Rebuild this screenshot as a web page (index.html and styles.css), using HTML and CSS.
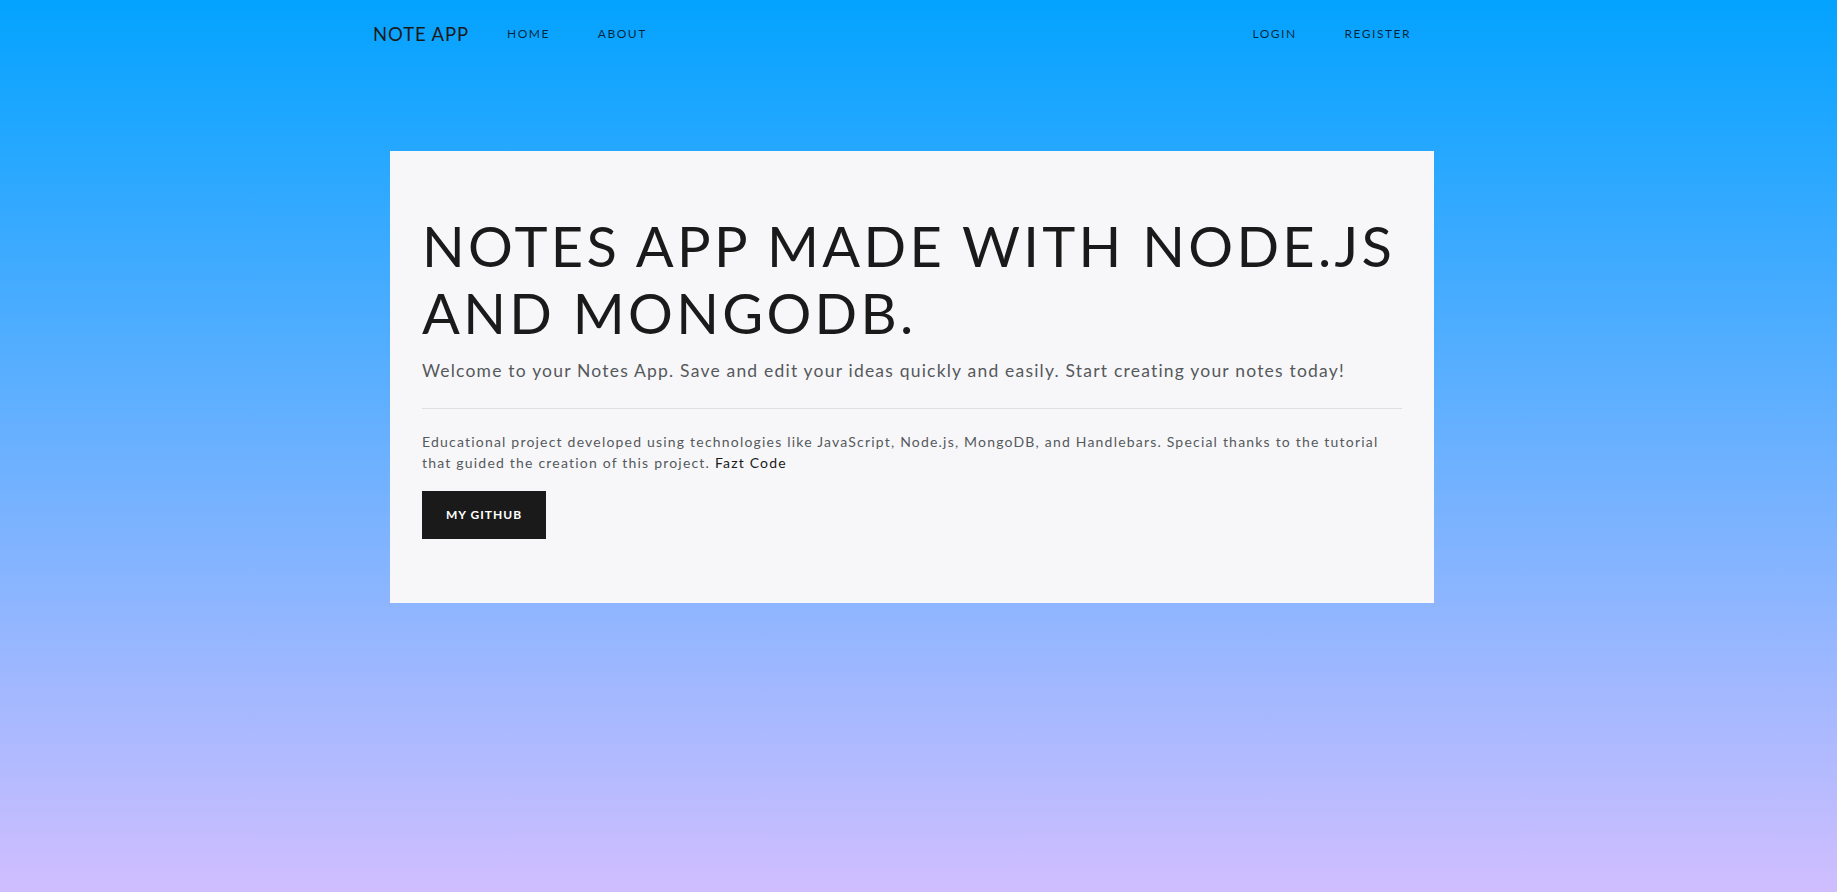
FILE: index.html
```html
<!DOCTYPE html>
<html lang="en">
<head>
<meta charset="utf-8">
<title>Note App</title>
<link rel="stylesheet" href="styles.css">
</head>
<body>
<nav class="navbar">
  <div class="nav-inner">
    <a class="brand" href="#">NOTE APP</a>
    <ul class="nav-list">
      <li><a class="nav-link" href="#">Home</a></li>
      <li><a class="nav-link" href="#">About</a></li>
    </ul>
    <ul class="nav-list nav-right">
      <li><a class="nav-link" href="#">Login</a></li>
      <li><a class="nav-link" href="#">Register</a></li>
    </ul>
  </div>
</nav>
<main class="main">
  <section class="jumbotron">
    <h1 class="title">Notes App made with Node.js and MongoDB.</h1>
    <p class="lead">Welcome to your Notes App. Save and edit your ideas quickly and easily. Start creating your notes today!</p>
    <hr class="divider">
    <p class="info">Educational project developed using technologies like JavaScript, Node.js, MongoDB, and Handlebars. Special thanks to the tutorial that guided the creation of this project. <a class="link" href="#">Fazt Code</a></p>
    <a class="btn" href="#">My GitHub</a>
  </section>
</main>
</body>
</html>
```
FILE: styles.css
```css
html, body {
  margin: 0;
  padding: 0;
  height: 100%;
}
body {
  font-family: Lato, "Noto Sans", "Liberation Sans", sans-serif;
  background: linear-gradient(180deg, #03a3ff 0%, #d0beff 100%);
  min-height: 892px;
  color: #55595c;
}
.navbar {
  height: 67px;
  display: flex;
  align-items: center;
}
.nav-inner {
  display: flex;
  align-items: center;
  width: 1038px;
  margin-left: 373px;
}
.brand {
  font-size: 18.5px;
  letter-spacing: 0.9px;
  color: #1a1a1a;
  text-decoration: none;
  margin-right: 14px;
}
.nav-list {
  display: flex;
  list-style: none;
  margin: 0;
  padding: 0;
}
.nav-right {
  margin-left: auto;
}
.nav-right li:last-child .nav-link {
  padding-right: 0;
}
.nav-link {
  display: block;
  padding: 0 24px;
  font-size: 12px;
  font-weight: 400;
  letter-spacing: 1.5px;
  text-transform: uppercase;
  color: rgba(0, 0, 0, 0.78);
  text-decoration: none;
}
.main {
  padding-top: 84px;
}
.jumbotron {
  box-sizing: border-box;
  width: 1044px;
  margin-left: 390px;
  padding: 61px 32px 64px;
  background: #f7f7f9;
}
.title {
  margin: 0 0 12px;
  font-size: 56px;
  line-height: 67px;
  font-weight: 400;
  letter-spacing: 3.3px;
  text-transform: uppercase;
  color: #1a1a1a;
}
.lead {
  margin: 0;
  font-size: 17.5px;
  line-height: 26px;
  font-weight: 400;
  letter-spacing: 1.2px;
  color: #55595c;
}
.divider {
  margin: 24px 0 22px;
  border: 0;
  border-top: 1px solid #dfdfe1;
}
.info {
  margin: 0 0 18px;
  font-size: 14px;
  line-height: 21px;
  letter-spacing: 1.2px;
  color: #55595c;
}
.link {
  color: #1a1a1a;
  text-decoration: none;
}
.btn {
  display: inline-block;
  height: 48px;
  line-height: 48px;
  padding: 0 24px;
  background: #1a1a1a;
  color: #ffffff;
  font-size: 12px;
  font-weight: 700;
  letter-spacing: 1px;
  text-transform: uppercase;
  text-decoration: none;
}
```
